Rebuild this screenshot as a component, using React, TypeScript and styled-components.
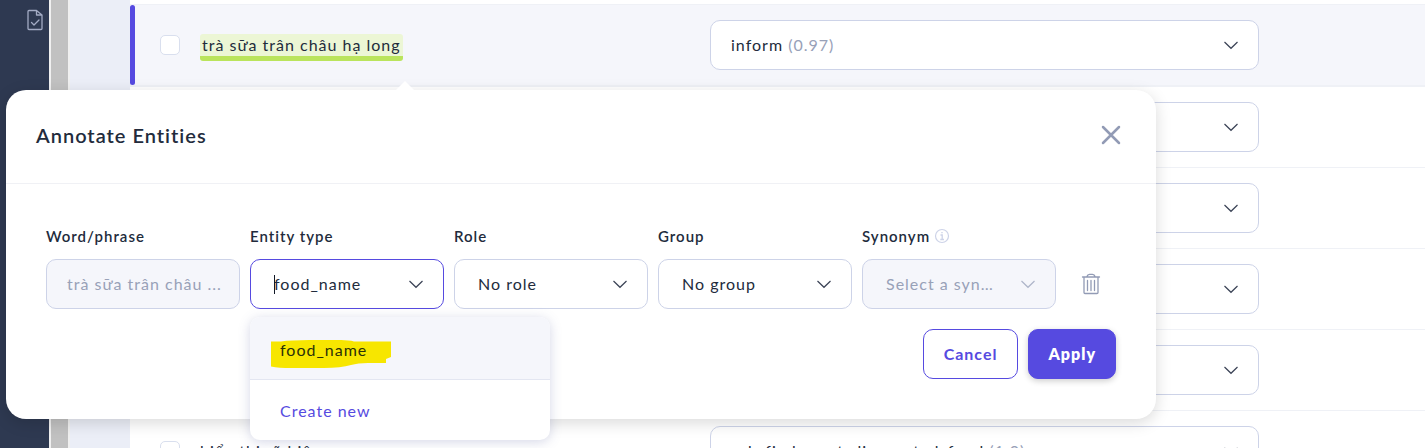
import React from 'react';
import styled, { createGlobalStyle, css } from 'styled-components';

const GlobalStyle = createGlobalStyle`
  *, *::before, *::after { box-sizing: border-box; }
  body {
    margin: 0;
    background: #fff;
    color: #222b3c;
    font-family: Lato, Roboto, sans-serif;
    font-size: 16px;
    line-height: 24px;
    letter-spacing: 1px;
    overflow: hidden;
  }
  button, input, select { font: inherit; letter-spacing: inherit; color: inherit; margin: 0; }
`;

const Page = styled.div`
  position: relative;
  display: flex;
  height: 100vh;
  overflow: hidden;
`;

const Sidebar = styled.nav`
  flex: 0 0 49px;
  display: flex;
  flex-direction: column;
  align-items: flex-end;
  padding: 9px 5px;
  background: #2e3951;
  color: #a3abc4;
`;

const SidebarLink = styled.a`
  display: flex;
  color: inherit;
`;

const ScrollTrack = styled.div`
  flex: 0 0 21px;
  background: #c1c1c1;
  border: solid #f0f0f0;
  border-width: 0 2px;
`;

const Gutter = styled.div`
  flex: 0 0 60px;
  background: #ebeef7;
`;

const Main = styled.main`
  flex: 1;
  min-width: 0;
  padding-top: 4px;
`;

const Row = styled.div<{ $active?: boolean }>`
  position: relative;
  display: grid;
  grid-template-columns: 20px minmax(0, 490fr) minmax(0, 549fr) 146px;
  column-gap: 20px;
  align-items: center;
  padding: 15px 0 15px 30px;
  border-bottom: 1px solid #eff1f6;
  ${p => p.$active && css`
    border-top: 1px solid #eff1f6;
    border-bottom-width: 2px;
    background: #f5f6fb;
    &::before {
      content: '';
      position: absolute;
      inset: 0 auto 0 0;
      width: 5px;
      border-radius: 3px;
      background: #564ae0;
    }
  `}
`;

const Checkbox = styled.input`
  appearance: none;
  width: 20px;
  height: 20px;
  border: 1px solid #d9dfee;
  border-radius: 5px;
  background: #fff;
`;

const Phrase = styled.div`
  display: flex;
  white-space: nowrap;
`;

const Entity = styled.mark`
  height: 27px;
  margin-top: 5px;
  padding: 0 2px;
  border-bottom: 5px solid #bae45c;
  border-radius: 3px;
  background: #ecf6d5;
  color: inherit;
  line-height: 22px;
`;

const Control = styled.div`
  display: grid;
  align-items: center;
  & > * { grid-area: 1 / 1; }
`;

const boxStyle = css`
  width: 100%;
  min-width: 0;
  height: 50px;
  border: 1px solid #cdd3e8;
  border-radius: 10px;
  background: #fff;
  outline: none;
  &:disabled { background: #f5f6fb; color: #98a1b8; opacity: 1; }
`;

const TextBox = styled.input<{ $focused?: boolean }>`
  ${boxStyle}
  padding: 0 10px 2px 20px;
  text-overflow: ellipsis;
  ${p => p.$focused && css`
    padding: 0 50px 2px 23px;
    border-color: #564ae0;
  `}
`;

const SelectBox = styled.select<{ $bare?: boolean }>`
  ${boxStyle}
  appearance: none;
  padding: 0 60px 0 23px;
  text-overflow: ellipsis;
  ${p => p.$bare && css`color: transparent;`}
`;

const IntentValue = styled.span`
  padding-left: 21px;
  pointer-events: none;
`;

const Score = styled.span`
  color: #98a1b8;
`;

const ChevronSvg = styled.svg<{ $dim?: boolean }>`
  justify-self: end;
  margin-right: 20px;
  pointer-events: none;
  color: ${p => (p.$dim ? '#aeb5c9' : '#3b4356')};
`;

const Caret = styled.span`
  width: 1px;
  height: 19px;
  margin-left: 24px;
  background: #111827;
`;

const Popover = styled.section`
  position: absolute;
  top: 90px;
  left: 6px;
  right: 269px;
  border-radius: 20px;
  background: #fff;
  box-shadow: 0 4px 16px rgba(0, 0, 0, 0.15);
`;

const Arrow = styled.svg`
  position: absolute;
  top: -9px;
  left: 390px;
`;

const Header = styled.header`
  display: flex;
  align-items: flex-start;
  justify-content: space-between;
  padding: 30px 30px 33px;
  border-bottom: 1px solid #f0f1f5;
`;

const Title = styled.h2`
  margin: 0;
  font-size: 20px;
  line-height: 30px;
  font-weight: 600;
`;

const IconButton = styled.button`
  display: grid;
  place-items: center;
  width: 30px;
  height: 30px;
  padding: 0;
  border: 0;
  background: none;
  color: #929bb5;
`;

const Body = styled.form`
  padding: 40px;
`;

const Fields = styled.div`
  display: grid;
  grid-template-columns: repeat(5, minmax(0, 1fr)) 50px;
  gap: 10px;
  align-items: end;
`;

const Field = styled.div`
  position: relative;
`;

const LabelLine = styled.div`
  display: flex;
  align-items: center;
  gap: 4px;
  margin-bottom: 11px;
  font-size: 15px;
  font-weight: 600;
`;

const DeleteCell = styled.div`
  display: grid;
  place-items: center;
  height: 50px;
`;

const Menu = styled.ul`
  position: absolute;
  z-index: 1;
  top: 93px;
  left: 0;
  width: 300px;
  margin: 0;
  padding: 0;
  list-style: none;
  border-radius: 10px;
  background: #fff;
  box-shadow: 0 2px 12px rgba(86, 96, 160, 0.25);
`;

const MenuItem = styled.li<{ $selected?: boolean }>`
  display: grid;
  align-items: center;
  height: 60px;
  padding: 2px 0 0 30px;
  color: #564ae0;
  & > * { grid-area: 1 / 1; }
  ${p => p.$selected && css`
    align-items: end;
    height: 63px;
    padding: 0 0 11px 21px;
    border-bottom: 1px solid #e3e6f1;
    border-radius: 10px 10px 0 0;
    background: #f5f6fb;
    color: #2a3008;
  `}
`;

const MarkedText = styled.span`
  padding: 0 0 6px 9px;
`;

const Actions = styled.div`
  display: flex;
  justify-content: flex-end;
  gap: 10px;
  margin-top: 20px;
`;

const Button = styled.button<{ $primary?: boolean }>`
  height: 50px;
  padding: 0 ${p => (p.$primary ? 19 : 20)}px;
  border: 1px solid #564ae0;
  border-radius: 10px;
  background: ${p => (p.$primary ? '#564ae0' : '#fff')};
  color: ${p => (p.$primary ? '#fff' : '#564ae0')};
  font-weight: ${p => (p.$primary ? 800 : 700)};
  ${p => p.$primary && css`box-shadow: 0 2px 6px rgba(0, 0, 0, 0.2);`}
`;

const Chevron = ({ dim }: { dim?: boolean }) => (
  <ChevronSvg $dim={dim} width="16" height="10" viewBox="0 0 16 10" fill="none" stroke="currentColor" strokeWidth="1.2" aria-hidden="true">
    <path d="M1.500 2 8 8.300l6.500-6.300" />
  </ChevronSvg>
);

const intents = [
  { phrase: 'trà sữa trân châu hạ long', name: 'inform', score: '(0.97)', entity: true },
  { phrase: '', name: '', score: '' },
  { phrase: '', name: '', score: '' },
  { phrase: '', name: '', score: '' },
  { phrase: '', name: '', score: '' },
  { phrase: 'hiển thị rõ hiện', name: 'ask_find_most_discounted_food', score: '(1.0)' },
];

export default function App() {
  return (
    <>
      <GlobalStyle />
      <Page>
        <Sidebar>
          <SidebarLink href="#review" aria-label="Review">
            <svg width="18" height="22" viewBox="0 0 18 22" fill="none" stroke="currentColor" strokeWidth="1.3" strokeLinejoin="round" strokeLinecap="round">
              <path d="M3 1.500h7.500L16 6v13.500q0 1-1 1H3q-1 0-1-1V2.500q0-1 1-1zM10.500 1.500V6H16M5.500 13.500l2.500 2.500 5-5" />
            </svg>
          </SidebarLink>
        </Sidebar>
        <ScrollTrack />
        <Gutter />
        <Main>
          {intents.map((item, i) => (
            <Row key={i} $active={item.entity}>
              <Checkbox type="checkbox" aria-label={`Message ${i + 1}`} />
              <Phrase>{item.entity ? <Entity>{item.phrase}</Entity> : item.phrase}</Phrase>
              <Control>
                <SelectBox $bare aria-label={`Intent ${i + 1}`}>
                  <option>{item.name}</option>
                </SelectBox>
                <IntentValue aria-hidden="true">
                  {item.name} <Score>{item.score}</Score>
                </IntentValue>
                <Chevron />
              </Control>
            </Row>
          ))}
        </Main>

        <Popover role="dialog" aria-labelledby="annotate-title">
          <Arrow width="18" height="9" viewBox="0 0 18 9" aria-hidden="true">
            <path d="M0 9 9 0l9 9z" fill="#fff" />
          </Arrow>
          <Header>
            <Title id="annotate-title">Annotate Entities</Title>
            <IconButton type="button" aria-label="Close">
              <svg width="20" height="20" viewBox="0 0 20 20" stroke="currentColor" strokeWidth="2.500" strokeLinecap="round">
                <path d="m2 2 16 16M18 2 2 18" />
              </svg>
            </IconButton>
          </Header>
          <Body>
            <Fields>
              <Field>
                <LabelLine as="label" htmlFor="phrase">Word/phrase</LabelLine>
                <TextBox id="phrase" disabled defaultValue="trà sữa trân châu ..." />
              </Field>
              <Field>
                <LabelLine as="label" htmlFor="type">Entity type</LabelLine>
                <Control>
                  <TextBox id="type" $focused role="combobox" aria-expanded="true" aria-controls="type-list" defaultValue="food_name" />
                  <Caret />
                  <Chevron />
                </Control>
                <Menu id="type-list" role="listbox">
                  <MenuItem role="option" aria-selected="true" $selected>
                    <svg width="121" height="28" viewBox="0 0 121 28" fill="#f7e600" aria-hidden="true">
                      <path d="M0 1.500h10Q20 0 38 0h32q8 0 13 1.500h37v15.500l-5 2v4H97q-10 0-17 2-10 3-27 3H20q-12 0-20-1.500z" />
                    </svg>
                    <MarkedText>food_name</MarkedText>
                  </MenuItem>
                  <MenuItem role="option" aria-selected="false">Create new</MenuItem>
                </Menu>
              </Field>
              <Field>
                <LabelLine as="label" htmlFor="role">Role</LabelLine>
                <Control>
                  <SelectBox id="role"><option>No role</option></SelectBox>
                  <Chevron />
                </Control>
              </Field>
              <Field>
                <LabelLine as="label" htmlFor="group">Group</LabelLine>
                <Control>
                  <SelectBox id="group"><option>No group</option></SelectBox>
                  <Chevron />
                </Control>
              </Field>
              <Field>
                <LabelLine>
                  <label htmlFor="synonym">Synonym</label>
                  <svg width="16" height="16" viewBox="0 0 16 16" fill="none" stroke="#cdd3e8" aria-hidden="true">
                    <circle cx="8" cy="8" r="6.500" strokeWidth="1.200" />
                    <path d="M6.500 7h1.700v4.300M6.300 11.500h3.700M7.300 4.600h1.400" strokeWidth="1.300" />
                  </svg>
                </LabelLine>
                <Control>
                  <SelectBox id="synonym" disabled><option>Select a syn...</option></SelectBox>
                  <Chevron dim />
                </Control>
              </Field>
              <DeleteCell>
                <IconButton type="button" aria-label="Delete entity">
                  <svg width="20" height="22" viewBox="0 0 20 22" fill="none" stroke="currentColor" strokeWidth="1.300" strokeLinecap="round">
                    <path d="M1.500 4h17M6 3.500Q6.500 1.300 8.500 1.300h3q2 0 2.500 2.200M3 4v15.500q0 1 1 1h12q1 0 1-1V4M6.500 7.500v10M10 7.500v10M13.500 7.500v10" />
                  </svg>
                </IconButton>
              </DeleteCell>
            </Fields>
            <Actions>
              <Button type="button">Cancel</Button>
              <Button type="button" $primary>Apply</Button>
            </Actions>
          </Body>
        </Popover>
      </Page>
    </>
  );
}
